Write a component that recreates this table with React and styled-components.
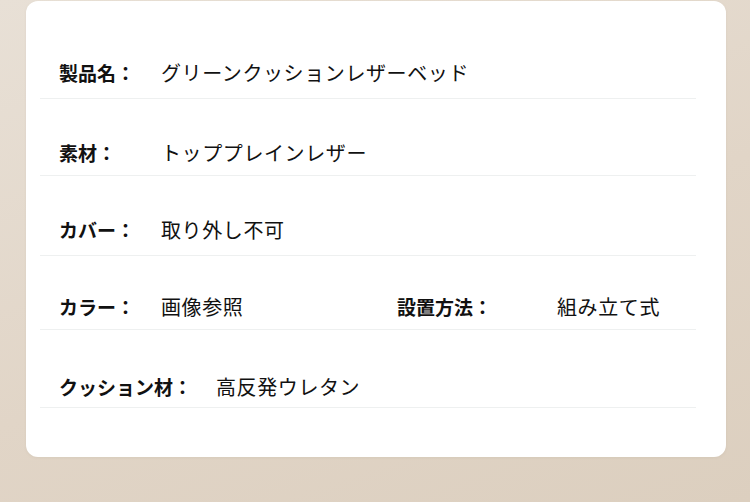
import React from 'react';
import styled, { createGlobalStyle } from 'styled-components';

const Global = createGlobalStyle`
html, body {
  margin: 0;
  padding: 0;
}
body {
  width: 750px;
  height: 502px;
  overflow: hidden;
  background: linear-gradient(160deg, #e8e0d6 0%, #e1d5c7 55%, #dccfbf 100%);
  font-family: "Noto Sans CJK JP", "Noto Sans", sans-serif;
  color: #111;
}
`

const Page = styled.div`
padding: 1px 24px 0 26px;
`
const Card = styled.div`
width: 700px;
box-sizing: border-box;
background: #fff;
border-radius: 12px;
padding: 20px 30px 49px 14px;
box-shadow: 0 1px 3px rgba(120, 100, 80, 0.08);
`
const Row = styled.div`
display: flex;
align-items: flex-end;
height: ${p => p.$h}px;
box-sizing: border-box;
padding: 0 0 ${p => p.$bottom}px 19px;
border-bottom: 1px solid #eef0f0;
`
const Field = styled.div`
display: flex;
align-items: center;
width: ${p => p.$w ? p.$w + 'px' : 'auto'};
`
const Label = styled.span`
display: inline-block;
min-width: ${p => p.$min}px;
margin-right: 24px;
font-size: 19px;
font-weight: 700;
line-height: 24px;
white-space: nowrap;
`
const Value = styled.span`
font-size: 20px;
letter-spacing: 0.6px;
line-height: 24px;
white-space: nowrap;
`

const rows = [
  { h: 78, bottom: 13, fields: [{ label: '製品名：', value: 'グリーンクッションレザーベッド' }] },
  { h: 77, bottom: 10, fields: [{ label: '素材：', value: 'トッププレインレザー' }] },
  { h: 80, bottom: 13, fields: [{ label: 'カバー：', value: '取り外し不可' }] },
  { h: 74, bottom: 10, fields: [
    { label: 'カラー：', value: '画像参照', w: 338 },
    { label: '設置方法：', value: '組み立て式', min: 136 },
  ] },
  { h: 78, bottom: 8, fields: [{ label: 'クッション材：', value: '高反発ウレタン' }] },
];

export default function App() {
  return (
    <Page>
      <Global />
      <Card>
        {rows.map((r, i) => (
          <Row key={i} $h={r.h} $bottom={r.bottom}>
            {r.fields.map((f, j) => (
              <Field key={j} $w={f.w}>
                <Label $min={f.min || 78}>{f.label}</Label>
                <Value>{f.value}</Value>
              </Field>
            ))}
          </Row>
        ))}
      </Card>
    </Page>
  );
}
